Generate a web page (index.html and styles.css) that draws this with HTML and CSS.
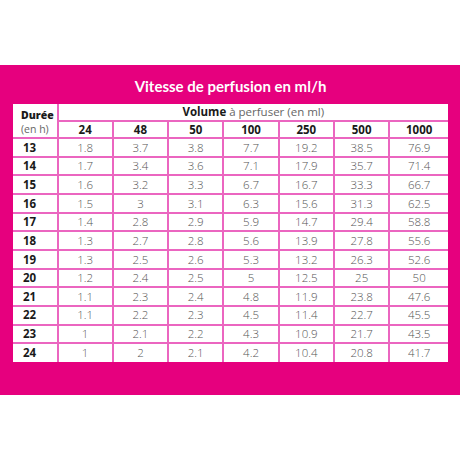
FILE: index.html
```html
<!DOCTYPE html>
<html lang="fr">
<head>
<meta charset="utf-8">
<title>Vitesse de perfusion</title>
<link rel="stylesheet" href="styles.css">
</head>
<body>
<section class="card">
  <h1 class="title">Vitesse de perfusion en ml/h</h1>
  <table class="grid">
    <colgroup>
      <col class="c-first">
      <col class="c-mid"><col class="c-mid"><col class="c-mid"><col class="c-mid"><col class="c-mid"><col class="c-mid">
      <col class="c-last">
    </colgroup>
    <thead>
      <tr class="h1">
        <th rowspan="2" class="dur"><b>Durée</b><span>(en h)</span></th>
        <th colspan="7" class="vol"><b>Volume</b> à perfuser (en ml)</th>
      </tr>
      <tr class="h2">
        <th>24</th><th>48</th><th>50</th><th>100</th><th>250</th><th>500</th><th>1000</th>
      </tr>
    </thead>
    <tbody>
      <tr><th>13</th><td>1.8</td><td>3.7</td><td>3.8</td><td>7.7</td><td>19.2</td><td>38.5</td><td>76.9</td></tr>
      <tr><th>14</th><td>1.7</td><td>3.4</td><td>3.6</td><td>7.1</td><td>17.9</td><td>35.7</td><td>71.4</td></tr>
      <tr><th>15</th><td>1.6</td><td>3.2</td><td>3.3</td><td>6.7</td><td>16.7</td><td>33.3</td><td>66.7</td></tr>
      <tr><th>16</th><td>1.5</td><td>3</td><td>3.1</td><td>6.3</td><td>15.6</td><td>31.3</td><td>62.5</td></tr>
      <tr><th>17</th><td>1.4</td><td>2.8</td><td>2.9</td><td>5.9</td><td>14.7</td><td>29.4</td><td>58.8</td></tr>
      <tr><th>18</th><td>1.3</td><td>2.7</td><td>2.8</td><td>5.6</td><td>13.9</td><td>27.8</td><td>55.6</td></tr>
      <tr><th>19</th><td>1.3</td><td>2.5</td><td>2.6</td><td>5.3</td><td>13.2</td><td>26.3</td><td>52.6</td></tr>
      <tr><th>20</th><td>1.2</td><td>2.4</td><td>2.5</td><td>5</td><td>12.5</td><td>25</td><td>50</td></tr>
      <tr><th>21</th><td>1.1</td><td>2.3</td><td>2.4</td><td>4.8</td><td>11.9</td><td>23.8</td><td>47.6</td></tr>
      <tr><th>22</th><td>1.1</td><td>2.2</td><td>2.3</td><td>4.5</td><td>11.4</td><td>22.7</td><td>45.5</td></tr>
      <tr><th>23</th><td>1</td><td>2.1</td><td>2.2</td><td>4.3</td><td>10.9</td><td>21.7</td><td>43.5</td></tr>
      <tr><th>24</th><td>1</td><td>2</td><td>2.1</td><td>4.2</td><td>10.4</td><td>20.8</td><td>41.7</td></tr>
    </tbody>
  </table>
</section>
</body>
</html>
```

FILE: styles.css
```css
html, body {
  margin: 0;
  padding: 0;
  background: #ffffff;
}
body {
  width: 460px;
  height: 460px;
  font-family: "Open Sans", "Liberation Sans", sans-serif;
}
.card {
  margin-top: 65px;
  height: 330px;
  background: #e6007e;
  padding: 0 12px 0 13px;
  box-sizing: border-box;
  display: flex;
  flex-direction: column;
}
.title {
  margin: 0;
  height: 39px;
  display: flex;
  align-items: center;
  justify-content: center;
  color: #ffffff;
  font-family: Lato, "Open Sans", sans-serif;
  font-weight: 700;
  font-size: 15px;
  padding-top: 2px;
  box-sizing: border-box;
}
.grid {
  width: 435px;
  table-layout: fixed;
  border-collapse: collapse;
  border-style: hidden;
  background: #ffffff;
  font-size: 11.5px;
}
.c-first { width: 44.5px; }
.c-mid { width: 55.3px; }
.c-last { width: 58.7px; }
.grid th, .grid td {
  border: 2px solid #eb66c0;
  padding: 0;
  text-align: center;
  line-height: 1;
}
.grid tbody tr { height: 18.67px; }
.grid thead tr { height: 17px; }
.grid td {
  color: #555555;
  font-weight: 300;
}
.grid th {
  color: #1a1a1a;
  font-weight: 700;
}
.grid tbody th {
  text-align: left;
  padding-left: 10px;
}
.grid thead .dur {
  vertical-align: top;
  text-align: left;
  padding-left: 8px;
  padding-top: 4px;
  font-size: 10.5px;
}
.dur b, .dur span {
  display: block;
  line-height: 14px;
}
.dur span {
  font-weight: 400;
  color: #666666;
}
.grid thead .vol {
  font-weight: 400;
  color: #666666;
}
.vol b {
  color: #1a1a1a;
  font-weight: 700;
}
```
